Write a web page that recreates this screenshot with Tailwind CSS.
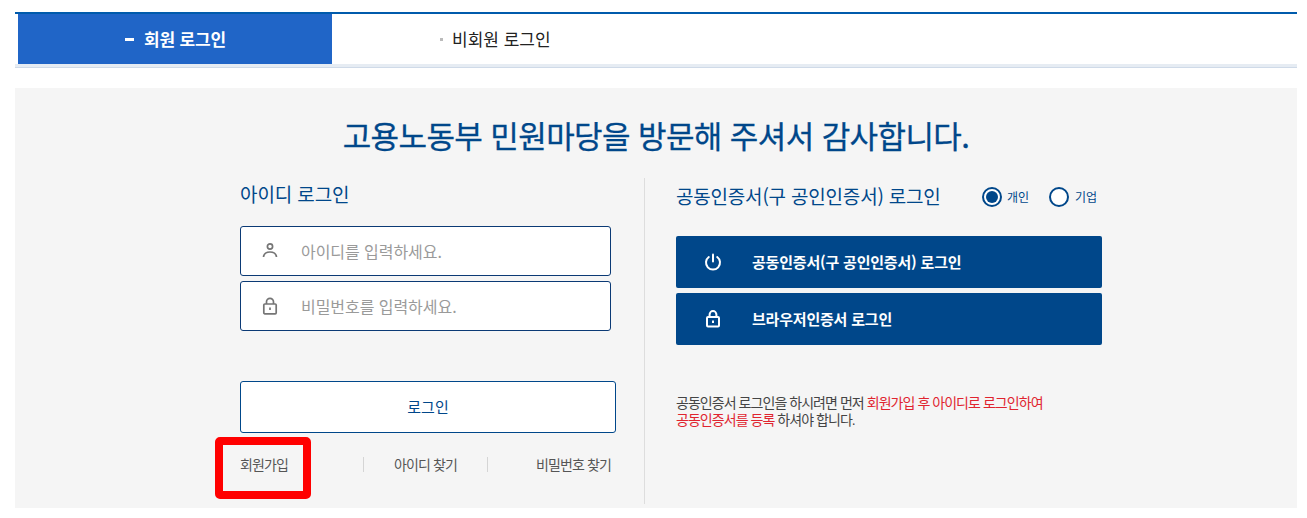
<!DOCTYPE html>
<html lang="ko">
<head>
    <meta charset="UTF-8">
    <title>회원 로그인</title>
    <script src="https://cdn.jsdelivr.net/npm/@tailwindcss/browser@4"></script>
</head>
<body class="bg-white h-[518px] overflow-hidden font-['Noto_Sans_CJK_KR',sans-serif]">
    <div class="pl-[15px] pr-[10px] pt-[12px]">
        <!-- Tabs -->
        <div class="border-t-2 border-b border-t-[#005bac] border-b-[#cfdae8]">
            <div class="flex h-[53px] border-b-[3px] border-b-[#e6ecf3] pl-[3px]">
                <div class="w-[314px] h-[50px] bg-[#2065c7] text-white text-[17px] font-bold tracking-[-0.2px] flex items-center justify-center gap-[10px] pl-[1px]">
                    <span class="w-[9px] h-[3px] bg-white"></span>
                    <span>회원 로그인</span>
                </div>
                <div class="h-[50px] pl-[108px] text-[#222222] text-[17px] flex items-center gap-[9px]">
                    <span class="w-[3px] h-[3px] bg-[#bbbbbb]"></span>
                    <span>비회원 로그인</span>
                </div>
            </div>
        </div>

        <!-- Panel -->
        <div class="mt-[20px] h-[420px] bg-[#f5f5f5]">
            <h1 class="pt-[24px] text-center text-[#00478a] text-[31px] leading-[46px] tracking-[-0.6px] font-normal [-webkit-text-stroke:0.3px_#00478a]">고용노동부 민원마당을 방문해 주셔서 감사합니다.</h1>

            <div class="flex mt-[20px] pl-[225px]">
                <!-- ID login -->
                <div class="w-[404px] h-[326px]">
                    <h2 class="mt-[3px] text-[19px] leading-[26px] text-[#00478a] tracking-[-0.1px]">아이디 로그인</h2>
                    <div class="mt-[19px] w-[371px] h-[50px] bg-white border border-[#0b3a75] rounded-[3px] flex items-center text-[#9a9a9a] text-[16px] tracking-[-0.05px]">
                        <svg class="ml-[20px] w-[18px] h-[18px]" viewBox="0 0 18 18" fill="none" stroke="#757575" stroke-width="1.7"><circle cx="9" cy="4.5" r="2.6"/><path d="M2.5 15c.4-3.6 3-5 6.500-5s6.100 1.400 6.500 5"/></svg>
                        <span class="ml-[22px]">아이디를 입력하세요.</span>
                    </div>
                    <div class="mt-[5px] w-[371px] h-[50px] bg-white border border-[#0b3a75] rounded-[3px] flex items-center text-[#9a9a9a] text-[16px] tracking-[-0.05px]">
                        <svg class="ml-[20px] w-[18px] h-[18px]" viewBox="0 0 18 18" fill="none" stroke="#757575" stroke-width="1.7"><rect x="2.800" y="7" width="12.400" height="9.800" rx="1"/><path d="M5.500 7V4.800a3.500 3.500 0 0 1 7 0V7"/><path d="M9 10.500v2.500"/></svg>
                        <span class="ml-[22px]">비밀번호를 입력하세요.</span>
                    </div>
                    <div class="mt-[50px] w-[376px] h-[52px] bg-white border border-[#00478a] rounded-[3px] flex items-center justify-center text-[#00478a] text-[15px] font-normal">로그인</div>
                    <div class="relative mt-[11px] w-[376px] flex items-center text-[14px] text-[#555555] tracking-[-0.9px] h-[40px]">
                        <span class="w-[123px]">회원가입</span>
                        <span class="w-[125px] h-[15px] border-l border-r border-[#d5d5d5] flex items-center justify-center">아이디 찾기</span>
                        <span class="flex-1 text-right pr-[5px]">비밀번호 찾기</span>
                        <!-- highlight box -->
                        <div class="absolute left-[-25px] top-[-7px] w-[96px] h-[62px] border-[8px] border-[#ff0000] rounded-[5px]"></div>
                    </div>
                </div>

                <!-- Certificate login -->
                <div class="h-[326px] border-l border-[#dddddd] pl-[31px] w-[460px]">
                    <div class="mt-[5px] flex items-center">
                        <h2 class="text-[19px] leading-[26px] text-[#00478a] tracking-[-0.2px] w-[306px] whitespace-nowrap">공동인증서(구 공인인증서) 로그인</h2>
                        <span class="mt-[2px] w-[20px] h-[20px] rounded-full border-2 border-[#00478a] bg-white flex items-center justify-center"><span class="w-[12px] h-[12px] rounded-full bg-[#00478a]"></span></span>
                        <span class="mt-[2px] ml-[5px] text-[12px] text-[#00478a] w-[24px] whitespace-nowrap">개인</span>
                        <span class="mt-[2px] ml-[18px] w-[20px] h-[20px] rounded-full border-2 border-[#00478a] bg-white"></span>
                        <span class="mt-[2px] ml-[6px] text-[12px] text-[#00478a] whitespace-nowrap">기업</span>
                    </div>
                    <div class="mt-[27px] w-[426px] h-[52px] bg-[#00478a] rounded-[2px] flex items-center text-white text-[15px] font-bold tracking-[-0.2px]">
                        <svg class="ml-[28px] w-[18px] h-[18px]" viewBox="0 0 18 18" fill="none" stroke="#ffffff" stroke-width="2" stroke-linecap="round"><path d="M9 1.500v7"/><path d="M4.800 4a7 7 0 1 0 8.400 0"/></svg>
                        <span class="ml-[30px]">공동인증서(구 공인인증서) 로그인</span>
                    </div>
                    <div class="mt-[5px] w-[426px] h-[52px] bg-[#00478a] rounded-[2px] flex items-center text-white text-[15px] font-bold tracking-[-0.2px]">
                        <svg class="ml-[28px] w-[18px] h-[18px]" viewBox="0 0 18 18" fill="none" stroke="#ffffff" stroke-width="2"><rect x="3" y="7" width="12" height="9.500" rx="1"/><path d="M5.600 7V4.500a3.400 3.400 0 0 1 6.800 0V7"/><path d="M9 10.500v2.500"/></svg>
                        <span class="ml-[30px]">브라우저인증서 로그인</span>
                    </div>
                    <p class="mt-[50px] font-['Liberation_Sans','Noto_Sans_CJK_KR',sans-serif] text-[14px] leading-[17px] text-[#444444] tracking-[-0.95px]">공동인증서 로그인을 하시려면 먼저 <span class="text-[#e0242f]">회원가입 후 아이디로 로그인하여</span><br><span class="text-[#e0242f]">공동인증서를 등록</span> 하셔야 합니다.</p>
                </div>
            </div>
        </div>
    </div>
</body>
</html>
